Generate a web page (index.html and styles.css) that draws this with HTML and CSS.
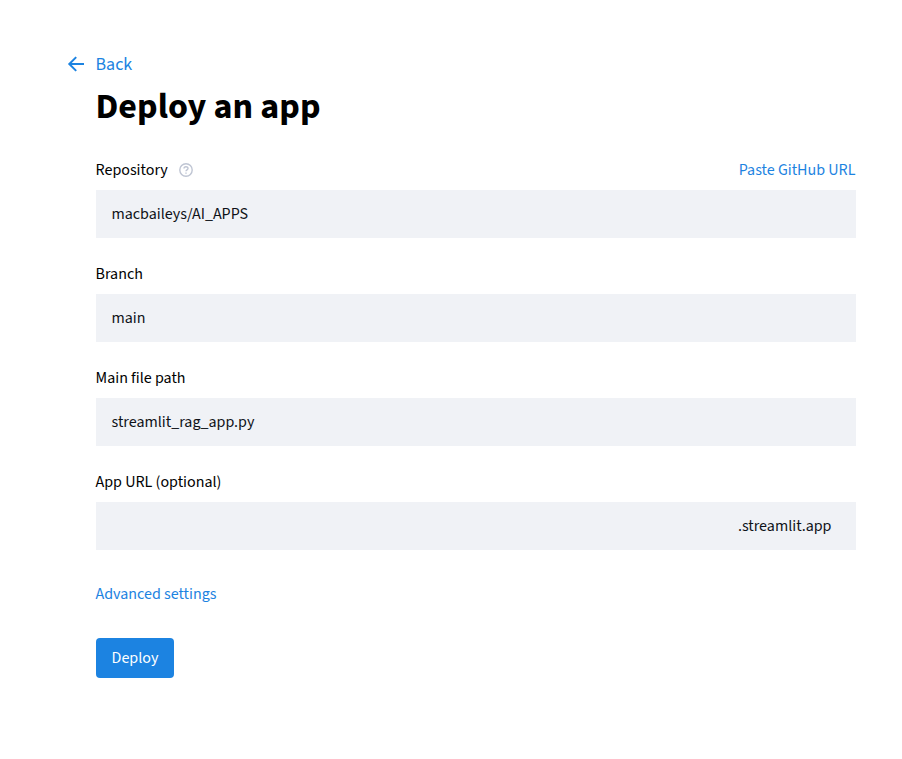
FILE: index.html
```html
<!DOCTYPE html>
<html lang="en">
<head>
<meta charset="utf-8">
<title>Deploy an app</title>
<link rel="stylesheet" href="styles.css">
</head>
<body>
<main class="page">
  <a class="back"><svg class="arrow" viewBox="0 0 18 18"><path d="M17 9H2.4M9.2 2.1L2.3 9l6.9 6.9" fill="none" stroke="currentColor" stroke-width="2"/></svg><span class="text">Back</span></a>
  <h1><span class="text">Deploy an app</span></h1>
  <form class="form">
    <div class="field">
      <div class="label"><span class="text">Repository</span><svg class="help" viewBox="0 0 14 14"><circle cx="7" cy="7" r="6.2"/><path d="M5 5.6C5 3.1 9 3.1 9 5.5C9 6.9 7 6.9 7 8.3M7 9.5v1.3"/></svg><a class="paste"><span class="text">Paste GitHub URL</span></a></div>
      <div class="input"><span class="text">macbaileys/AI_APPS</span></div>
    </div>
    <div class="field">
      <div class="label"><span class="text">Branch</span></div>
      <div class="input"><span class="text">main</span></div>
    </div>
    <div class="field">
      <div class="label"><span class="text">Main file path</span></div>
      <div class="input"><span class="text">streamlit_rag_app.py</span></div>
    </div>
    <div class="field">
      <div class="label"><span class="text">App URL (optional)</span></div>
      <div class="input suffix"><span class="text">.streamlit.app</span></div>
    </div>
    <a class="advanced"><span class="text">Advanced settings</span></a>
    <button type="button" class="deploy">Deploy</button>
  </form>
</main>
</body>
</html>
```
FILE: styles.css
```css
* { box-sizing: border-box; }
body { margin: 0; background: #fff; color: #000; font: 16px/24px "Source Sans Pro", "Source Sans 3", "Noto Sans CJK SC", "Noto Sans", sans-serif; }
.page { width: 760px; margin-left: 96px; padding-top: 52px; }
.text { margin-left: -0.5px; margin-right: 0.5px; white-space: nowrap; }
.back { display: flex; align-items: center; height: 24px; margin-left: -29px; color: #1c83e1; font-size: 18px; }
.back .text { padding-top: 2px; }
.arrow { width: 18px; height: 18px; margin-right: 11px; }
h1 { margin: 9px 0 0; height: 44px; font-size: 36px; line-height: 44px; font-weight: 700; }
.form { padding-top: 29px; }
.field { height: 104px; }
.label { display: flex; align-items: center; height: 24px; }
.help { width: 14px; height: 14px; margin-left: 11px; fill: none; stroke: #bfc5d3; stroke-width: 1.4; }
.paste { margin-left: auto; color: #1c83e1; }
.input { display: flex; align-items: center; height: 48px; margin-top: 8px; padding: 0 16px; background: #f0f2f6; color: #0e1117; }
.suffix { justify-content: flex-end; padding-right: 24px; }
.advanced { display: block; height: 24px; margin-top: 8px; color: #1c83e1; }
.deploy { display: block; width: 78px; height: 40px; margin-top: 32px; padding: 0; border: 0; border-radius: 4px; background: #1c83e1; color: #fff; font: inherit; }
```
